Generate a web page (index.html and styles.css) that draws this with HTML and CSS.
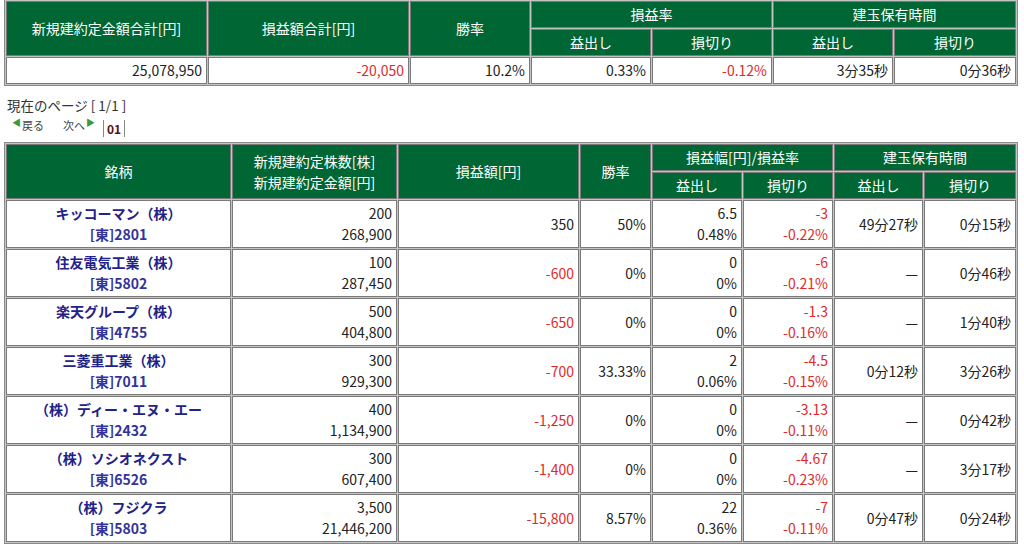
FILE: index.html
```html
<!DOCTYPE html>
<html lang="ja">
<head>
<meta charset="utf-8">
<title>取引集計</title>
<link rel="stylesheet" href="styles.css">
</head>
<body>
<div class="page">
  <table class="grid summary">
    <colgroup>
      <col class="c202"><col class="c202"><col class="c121"><col class="c121"><col class="c121"><col class="c121"><col class="c123">
    </colgroup>
    <tr>
      <th rowspan="2">新規建約定金額合計[円]</th>
      <th rowspan="2">損益額合計[円]</th>
      <th rowspan="2">勝率</th>
      <th colspan="2">損益率</th>
      <th colspan="2">建玉保有時間</th>
    </tr>
    <tr>
      <th>益出し</th><th>損切り</th><th>益出し</th><th>損切り</th>
    </tr>
    <tr>
      <td class="num">25,078,950</td>
      <td class="num neg">-20,050</td>
      <td class="num">10.2%</td>
      <td class="num">0.33%</td>
      <td class="num neg">-0.12%</td>
      <td class="num">3分35秒</td>
      <td class="num">0分36秒</td>
    </tr>
  </table>

  <div class="pageinfo">現在のページ [ 1/1 ]</div>
  <div class="pager">
    <span class="prev"><span class="tri">◀</span>戻る</span>
    <span class="next">次へ<span class="tri">▶</span></span>
    <span class="pages"><span class="bar"></span><b>01</b><span class="bar"></span></span>
  </div>

  <table class="grid detail">
    <colgroup>
      <col class="d1"><col class="d2"><col class="d3"><col class="d4"><col class="d5"><col class="d5"><col class="d7"><col class="d8">
    </colgroup>
    <tr>
      <th rowspan="2">銘柄</th>
      <th rowspan="2">新規建約定株数[株]<br>新規建約定金額[円]</th>
      <th rowspan="2">損益額[円]</th>
      <th rowspan="2">勝率</th>
      <th colspan="2">損益幅[円]/損益率</th>
      <th colspan="2">建玉保有時間</th>
    </tr>
    <tr>
      <th>益出し</th><th>損切り</th><th>益出し</th><th>損切り</th>
    </tr>
    <tr>
      <td class="name"><b>キッコーマン（株）</b><br><span class="code">[東]2801</span></td>
      <td class="num">200<br>268,900</td>
      <td class="num">350</td>
      <td class="num">50%</td>
      <td class="num">6.5<br>0.48%</td>
      <td class="num neg">-3<br>-0.22%</td>
      <td class="num">49分27秒</td>
      <td class="num">0分15秒</td>
    </tr>
    <tr>
      <td class="name"><b>住友電気工業（株）</b><br><span class="code">[東]5802</span></td>
      <td class="num">100<br>287,450</td>
      <td class="num neg">-600</td>
      <td class="num">0%</td>
      <td class="num">0<br>0%</td>
      <td class="num neg">-6<br>-0.21%</td>
      <td class="num">—</td>
      <td class="num">0分46秒</td>
    </tr>
    <tr>
      <td class="name"><b>楽天グループ（株）</b><br><span class="code">[東]4755</span></td>
      <td class="num">500<br>404,800</td>
      <td class="num neg">-650</td>
      <td class="num">0%</td>
      <td class="num">0<br>0%</td>
      <td class="num neg">-1.3<br>-0.16%</td>
      <td class="num">—</td>
      <td class="num">1分40秒</td>
    </tr>
    <tr>
      <td class="name"><b>三菱重工業（株）</b><br><span class="code">[東]7011</span></td>
      <td class="num">300<br>929,300</td>
      <td class="num neg">-700</td>
      <td class="num">33.33%</td>
      <td class="num">2<br>0.06%</td>
      <td class="num neg">-4.5<br>-0.15%</td>
      <td class="num">0分12秒</td>
      <td class="num">3分26秒</td>
    </tr>
    <tr>
      <td class="name"><b>（株）ディー・エヌ・エー</b><br><span class="code">[東]2432</span></td>
      <td class="num">400<br>1,134,900</td>
      <td class="num neg">-1,250</td>
      <td class="num">0%</td>
      <td class="num">0<br>0%</td>
      <td class="num neg">-3.13<br>-0.11%</td>
      <td class="num">—</td>
      <td class="num">0分42秒</td>
    </tr>
    <tr>
      <td class="name"><b>（株）ソシオネクスト</b><br><span class="code">[東]6526</span></td>
      <td class="num">300<br>607,400</td>
      <td class="num neg">-1,400</td>
      <td class="num">0%</td>
      <td class="num">0<br>0%</td>
      <td class="num neg">-4.67<br>-0.23%</td>
      <td class="num">—</td>
      <td class="num">3分17秒</td>
    </tr>
    <tr>
      <td class="name"><b>（株）フジクラ</b><br><span class="code">[東]5803</span></td>
      <td class="num">3,500<br>21,446,200</td>
      <td class="num neg">-15,800</td>
      <td class="num">8.57%</td>
      <td class="num">22<br>0.36%</td>
      <td class="num neg">-7<br>-0.11%</td>
      <td class="num">0分47秒</td>
      <td class="num">0分24秒</td>
    </tr>
  </table>
</div>
</body>
</html>
```
FILE: styles.css
```css
html, body {
  margin: 0;
  padding: 0;
  background: #ffffff;
}
body {
  font-family: "Noto Sans CJK JP", "Noto Sans", sans-serif;
  font-size: 14px;
  color: #222222;
}
.page {
  padding: 0 6px 0 4px;
}
.grid {
  border-collapse: separate;
  border-spacing: 1px;
  border: 1px solid #8a8a8a;
  background: #c4c4c4;
  width: 1013px;
  table-layout: fixed;
}
.grid th,
.grid td {
  border: 1px solid #7a7a7a;
  padding: 2px 4px;
  line-height: 21px;
  font-weight: normal;
}
.grid th {
  background: #006633;
  color: #ffffff;
  text-align: center;
}
.grid td {
  background: #ffffff;
}
.summary {
  margin-top: -1px;
}
.summary .c202 { width: 201px; }
.summary .c121 { width: 120px; }
.summary .c123 { width: 122px; }
.num {
  text-align: right;
  padding-right: 3px;
}
.neg {
  color: #e02a2a;
}
.pageinfo {
  margin-top: 11px;
  padding-left: 3px;
  font-size: 13.5px;
  line-height: 16px;
  color: #333333;
}
.pager {
  display: flex;
  align-items: flex-end;
  height: 24px;
  padding-left: 7px;
  font-size: 11px;
  color: #444444;
  margin-bottom: 5px;
}
.pager .prev,
.pager .next {
  display: inline-flex;
  align-items: flex-start;
  line-height: 14px;
  margin-bottom: 5px;
}
.pager .next {
  margin-left: 19px;
}
.tri {
  color: #3c9a3c;
  font-size: 9px;
  line-height: 10px;
  margin: 0 1px;
}
.pages {
  display: inline-flex;
  align-items: center;
  margin-left: 7px;
  height: 17px;
}
.pages b {
  color: #5a1010;
  font-size: 12px;
  padding: 0 3px;
}
.bar {
  display: inline-block;
  width: 1px;
  height: 17px;
  background: #888888;
}
.detail .d1 { width: 225px; }
.detail .d2 { width: 165px; }
.detail .d3 { width: 181px; }
.detail .d4 { width: 71px; }
.detail .d5 { width: 90px; }
.detail .d7 { width: 89px; }
.detail .d8 { width: 92px; }
.name {
  text-align: center;
}
.name b {
  color: #22228a;
  font-weight: bold;
  font-size: 14px;
}
.code {
  color: #33339a;
  font-weight: bold;
}
```
